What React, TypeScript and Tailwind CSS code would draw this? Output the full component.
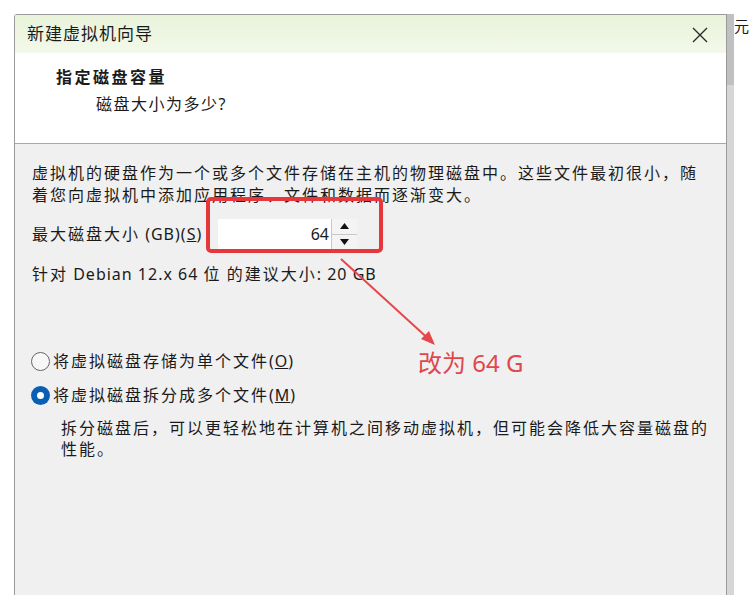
import React from 'react';

const font = { fontFamily: '"Noto Sans", "Noto Sans CJK SC", sans-serif' };

function Radio({ checked }: { checked?: boolean }) {
  if (checked) {
    return (
      <span className="flex h-[19px] w-[19px] shrink-0 items-center justify-center rounded-full bg-[#0a5fb4]">
        <span className="h-[7px] w-[7px] rounded-full bg-white" />
      </span>
    );
  }
  return <span className="h-[19px] w-[19px] shrink-0 rounded-full border border-[#666] bg-[#f7f7f7]" />;
}

export default function App() {
  return (
    <div className="relative flex h-[595px] w-[751px] overflow-hidden bg-white pl-[14px] pt-[14px] text-[#1a1a1a]" style={font}>
      {/* dialog */}
      <div className="flex w-[713px] flex-col rounded-tl-[3px] border-l border-t border-r border-[#9a9a9a]">
        {/* title bar */}
        <div className="flex h-[38px] items-center justify-between bg-gradient-to-b from-[#e8f3da] to-[#f3f9ea] pl-[12px] pr-[17px]">
          <span className="text-[17px] tracking-[1px]">新建虚拟机向导</span>
          <svg width="18" height="18" viewBox="0 0 18 18" className="mt-[1px]">
            <path d="M2 2 L16 16 M16 2 L2 16" stroke="#2a2a2a" strokeWidth="1.4" fill="none" />
          </svg>
        </div>

        {/* header */}
        <div className="h-[91px] border-b border-[#a8a8a8] bg-white pl-[41px] pt-[13px]">
          <div className="text-[16px] font-bold leading-[22px] tracking-[2.5px]">指定磁盘容量</div>
          <div className="ml-[40px] mt-[5px] text-[16px] leading-[22px] tracking-[1.5px]">磁盘大小为多少?</div>
        </div>

        {/* body */}
        <div className="flex-1 bg-[#f0f0f0] pl-[17px] pt-[18px] text-[16px] tracking-[2px]">
          <p className="leading-[22px]">
            虚拟机的硬盘作为一个或多个文件存储在主机的物理磁盘中。这些文件最初很小，随
            <br />
            着您向虚拟机中添加应用程序、文件和数据而逐渐变大。
          </p>

          <div className="mt-[12px] flex h-[32px] items-center">
            <span className="w-[186px]">
              最大磁盘大小<span className="tracking-[1px]"> (GB)(<span className="underline">S</span>)</span>
            </span>
            <div className="flex h-[30px] items-stretch">
              <div className="flex w-[113px] items-center justify-end bg-white pr-[2px] tracking-normal">64</div>
              <div className="flex w-[26px] flex-col border-l border-[#c8c8c8] bg-[#f4f4f4]">
                <div className="flex flex-1 items-center justify-center border-b border-[#c8c8c8]">
                  <svg width="9" height="6" viewBox="0 0 9 6"><path d="M4.5 0 L9 6 L0 6 Z" fill="#111" /></svg>
                </div>
                <div className="flex flex-1 items-center justify-center">
                  <svg width="9" height="6" viewBox="0 0 9 6"><path d="M0 0 L9 0 L4.5 6 Z" fill="#111" /></svg>
                </div>
              </div>
            </div>
          </div>

          <p className="mt-[13px] leading-[22px]">
            针对<span className="tracking-[1px]"> Debian 12.x 64 </span>位<span className="tracking-[1px]"> </span>的建议大小<span className="tracking-[1px]">: 20 GB</span>
          </p>

          <div className="mt-[65px] flex h-[22px] items-center gap-[3px] -ml-[1px]">
            <Radio />
            <span>
              将虚拟磁盘存储为单个文件<span className="tracking-[1px]">(<span className="underline">O</span>)</span>
            </span>
          </div>
          <div className="mt-[12px] flex h-[22px] items-center gap-[3px] -ml-[1px]">
            <Radio checked />
            <span>
              将虚拟磁盘拆分成多个文件<span className="tracking-[1px]">(<span className="underline">M</span>)</span>
            </span>
          </div>
          <p className="ml-[29px] mt-[12px] leading-[21px]">
            拆分磁盘后，可以更轻松地在计算机之间移动虚拟机，但可能会降低大容量磁盘的
            <br />
            性能。
          </p>
        </div>
      </div>

      {/* neighbouring window edge */}
      <div className="flex w-[7px] flex-col">
        <div className="h-[71px] bg-[#c0c0c0]" />
        <div className="flex-1 bg-[#d6d6d6]" />
      </div>
      <div className="w-[16px] pt-[3px] text-[15px] leading-[18px]">元</div>

      {/* annotation overlay */}
      <div className="absolute left-[206px] top-[197px] h-[56px] w-[177px] rounded-[5px] border-[4px] border-[#e5373c]" />
      <svg className="absolute left-0 top-0" width="751" height="595" viewBox="0 0 751 595">
        <path d="M341 259 L433 343" stroke="#e5484b" strokeWidth="2" fill="none" />
        <path d="M435 345 L421 339 L429 331 Z" fill="#e5484b" />
      </svg>
      <div className="absolute left-[418px] top-[348px] text-[24px] leading-[30px] text-[#e0474c]">
        改为 64 G
      </div>
    </div>
  );
}
